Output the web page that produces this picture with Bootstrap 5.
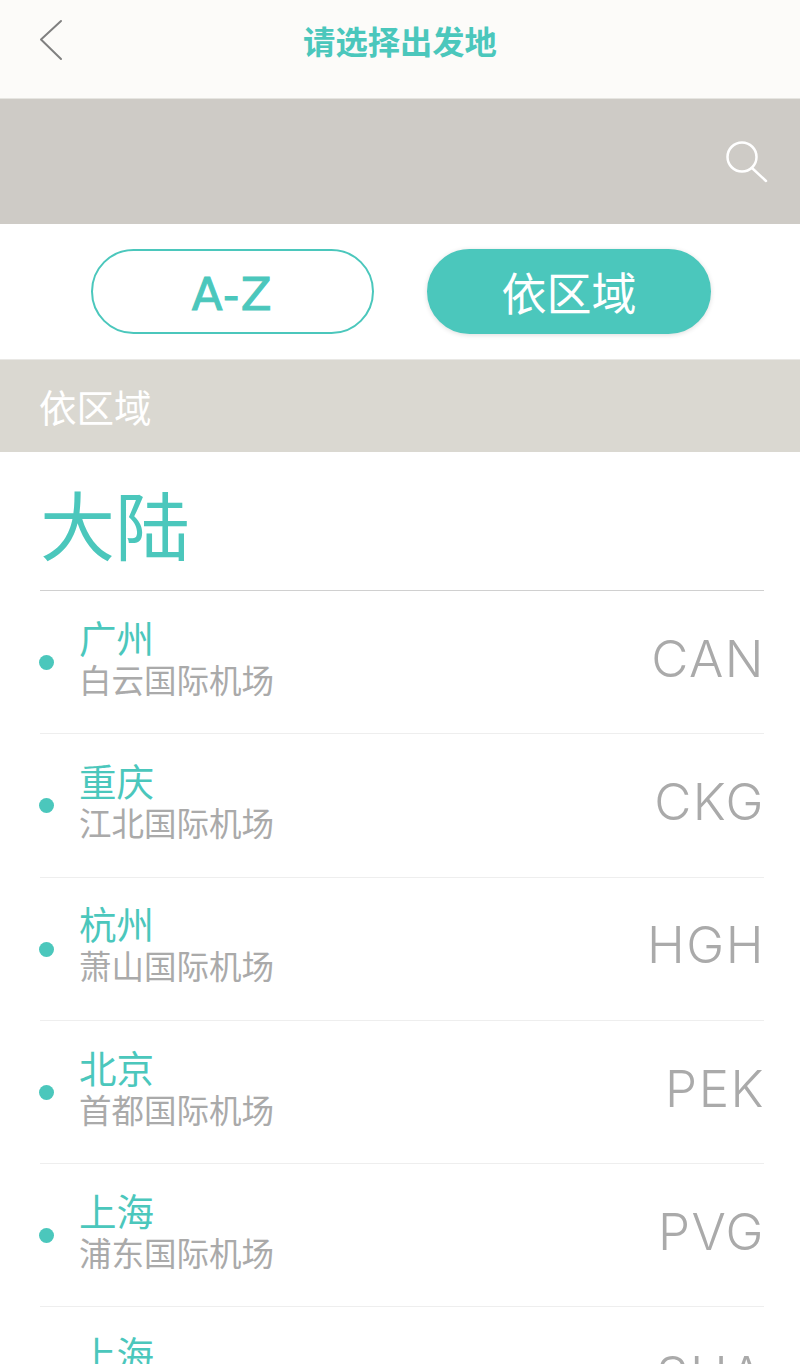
<!DOCTYPE html>
<html lang="zh-CN">
<head>
    <meta charset="UTF-8">
    <meta name="viewport" content="width=device-width, initial-scale=1.0">
    <title>请选择出发地</title>
    <link href="https://cdn.jsdelivr.net/npm/bootstrap@5.3.3/dist/css/bootstrap.min.css" rel="stylesheet">
    <script src="https://cdn.jsdelivr.net/npm/bootstrap@5.3.3/dist/js/bootstrap.bundle.min.js"></script>
    <style>
        html, body { height: 1364px; overflow: hidden; }
        body {
            background: #fff;
            font-family: "Noto Sans CJK SC", sans-serif;
            font-weight: 400;
        }
        .top-bar {
            height: 99px;
            background: #fcfbf9;
            border-bottom: 1px solid #e6e5e1;
            padding-left: 38px;
            padding-bottom: 18px;
        }
        .top-title {
            color: #4bc7bc;
            font-size: 32.300px;
            font-weight: 700;
            line-height: 1;
            left: 0;
            right: 0;
            top: 24px;
        }
        .search-band {
            height: 125px;
            background: #cecbc6;
            padding: 0 31px 0 0;
        }
        .tab-row {
            height: 136px;
            gap: 53px;
            padding-left: 91px;
            border-bottom: 1px solid #e9e8e5;
        }
        .tab-pill {
            height: 85px;
            border-radius: 43px;
            border: 2px solid #4bc7bc;
            color: #4bc7bc;
            background: #fff;
            padding: 0;
            line-height: 1;
        }
        .tab-az {
            width: 283px;
            font-size: 45px;
            font-family: "DejaVu Sans", sans-serif;
            -webkit-text-stroke: 1px #4bc7bc;
            letter-spacing: 1.500px;
            padding-top: 5px;
        }
        .tab-area {
            width: 284px;
            background: #4bc7bc;
            color: #fff;
            font-size: 45px;
            box-shadow: 0 1px 5px rgba(0, 0, 0, .14);
        }
        .section-band {
            height: 92px;
            background: #dad8d1;
            color: #fff;
            font-size: 37.500px;
            padding: 0 40px 0 39px;
        }
        .list-wrap { margin: 0 36px 0 40px; }
        .region-title {
            height: 139px;
            color: #4bc7bc;
            font-size: 75px;
            line-height: 1;
            padding-top: 33px;
            border-bottom: 1px solid #d0d0d0;
        }
        .airport-row {
            height: 143.300px;
            border-bottom: 1px solid #eeeeee;
        }
        .dot-mark {
            width: 15px;
            height: 15px;
            border-radius: 50%;
            background: #4bc7bc;
            margin-left: -1px;
            margin-right: 25px;
            margin-top: 1px;
        }
        .airport-text { margin-top: -12px; }
        .city-name {
            color: #4bc7bc;
            font-size: 37.500px;
            line-height: 45px;
        }
        .airport-name {
            color: #aaaaaa;
            font-size: 32.500px;
            line-height: 40px;
        }
        .iata-code {
            color: #aaaaaa;
            font-family: "Inter", sans-serif;
            font-size: 51px;
            font-weight: 300;
            letter-spacing: 1.500px;
            line-height: 1;
            margin-top: -8px;
            margin-right: -1px;
        }
    </style>
</head>
<body>
    <div class="top-bar position-relative d-flex align-items-center">
        <svg width="26" height="42" viewBox="0 0 26 42" fill="none" stroke="#808080" stroke-width="2" stroke-linecap="round" stroke-linejoin="round"><path d="M23 2 3 20.500 23 40"/></svg>
        <div class="top-title position-absolute text-center">请选择出发地</div>
    </div>
    <div class="search-band d-flex align-items-center justify-content-end">
        <svg width="44" height="44" viewBox="0 0 44 44" fill="none" stroke="#fff" stroke-width="2.500" stroke-linecap="round"><circle cx="17" cy="17" r="14.500"/><path d="M27 28 41 41"/></svg>
    </div>
    <div class="tab-row d-flex align-items-center">
        <button type="button" class="btn tab-pill tab-az">A-Z</button>
        <button type="button" class="btn tab-pill tab-area">依区域</button>
    </div>
    <div class="section-band d-flex align-items-center">依区域</div>
    <div class="list-wrap">
        <div class="region-title">大陆</div>
        <div id="airport-list"></div>
    </div>

    <script>
        const airports = [
            ['广州', '白云国际机场', 'CAN'],
            ['重庆', '江北国际机场', 'CKG'],
            ['杭州', '萧山国际机场', 'HGH'],
            ['北京', '首都国际机场', 'PEK'],
            ['上海', '浦东国际机场', 'PVG'],
            ['上海', '虹桥国际机场', 'SHA']
        ];

        const list = document.getElementById('airport-list');
        airports.forEach(function (a) {
            list.innerHTML += `
                <div class="airport-row d-flex align-items-center">
                    <span class="dot-mark flex-shrink-0"></span>
                    <div class="airport-text flex-grow-1">
                        <div class="city-name">${a[0]}</div>
                        <div class="airport-name">${a[1]}</div>
                    </div>
                    <div class="iata-code">${a[2]}</div>
                </div>`;
        });
    </script>
</body>
</html>
